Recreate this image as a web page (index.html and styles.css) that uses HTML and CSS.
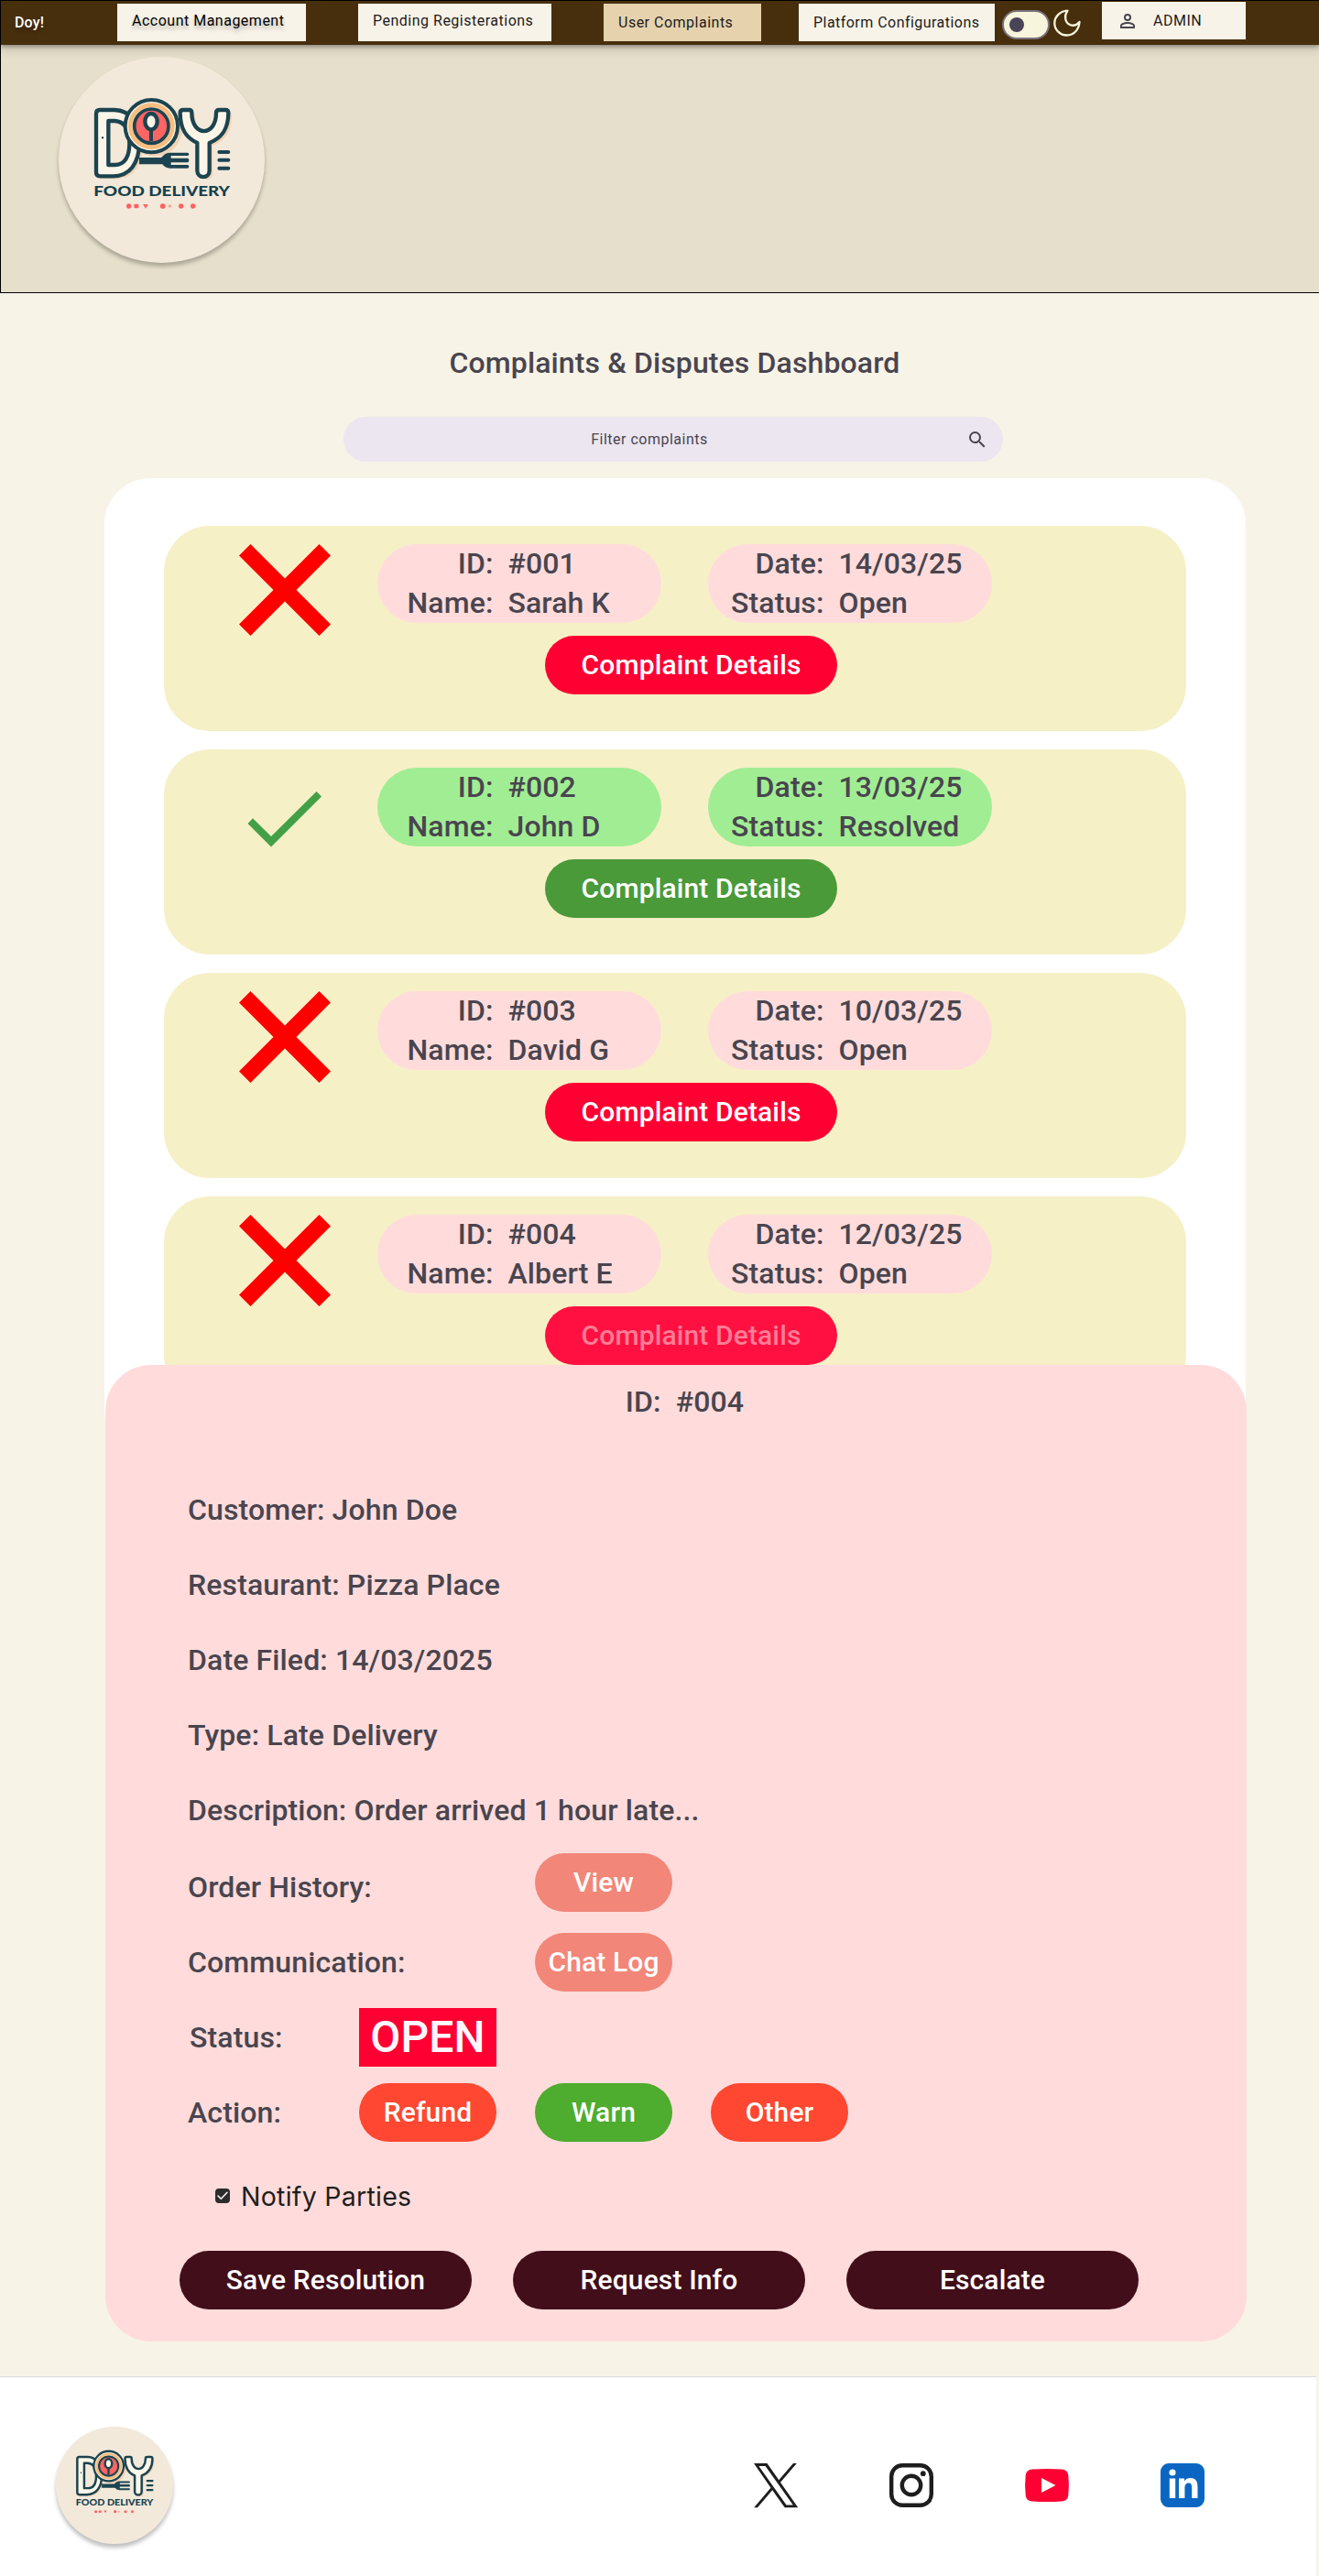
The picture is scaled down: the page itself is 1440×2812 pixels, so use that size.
FILE: index.html
```html
<!DOCTYPE html>
<html lang="en">
<head>
<meta charset="utf-8">
<title>Complaints &amp; Disputes Dashboard</title>
<link rel="stylesheet" href="styles.css">
</head>
<body>
<svg class="defs" width="0" height="0" aria-hidden="true">
  <symbol id="cross" viewBox="0 0 100 100"><path d="M12.5 0L50 37.5L87.5 0L100 12.5L62.5 50L100 87.5L87.5 100L50 62.5L12.5 100L0 87.5L37.5 50L0 12.5Z" fill="#f00"/></symbol>
  <symbol id="check" viewBox="0 0 100 100"><path d="M9.5 36L15 30.200L35 50L84.500 1L90 6.500L35 61.500Z" fill="#43a047"/></symbol>
</svg>

<header class="header">
  <nav class="bar">
    <span class="brand">Doy!</span>
    <a class="tab tab-account">Account Management</a>
    <a class="tab tab-pending">Pending Registerations</a>
    <a class="tab tab-complaints">User Complaints</a>
    <a class="tab tab-platform">Platform Configurations</a>
    <span class="switch"><span class="knob"></span></span>
    <svg class="moon" viewBox="0 0 30 30"><path d="M15.500 1.600C7.500 2 1.300 8 1.300 15.200C1.300 22.600 7.300 28.500 14.700 28.500C22 28.500 28 22.700 28.500 14C25.500 17.500 21.500 18.500 18 17C12.500 14.500 11.500 7 15.500 1.600Z" fill="none" stroke="#f7f5dc" stroke-width="2.300" stroke-linejoin="round"/></svg>
    <a class="tab tab-admin">
      <svg class="person" viewBox="4 4 16 16"><path fill="#49454f" d="M12 5.900a2.100 2.100 0 1 1 0 4.200 2.100 2.100 0 0 1 0-4.200m0 9c2.970 0 6.100 1.460 6.100 2.100v1.100H5.900V17c0-.64 3.130-2.100 6.100-2.100M12 4a4 4 0 1 0 0 8 4 4 0 0 0 0-8m0 9c-2.670 0-8 1.340-8 4v3h16v-3c0-2.660-5.330-4-8-4"/></svg>
      ADMIN
    </a>
  </nav>
  <svg class="logo logo-large" viewBox="0 0 225 225">
    <g id="logo" transform="translate(26 36) scale(.33333)" stroke-linejoin="round" stroke-linecap="round">
      <g fill="#f0d3b5" transform="translate(11 9)">
        <path d="M44 78Q44 66 56 66H105C160 66 186 120 186 175C186 240 155 283 100 283H56Q44 283 44 271Z"/>
        <circle cx="226" cy="119" r="90"/>
        <path d="M320 76Q320 66 330 66H350Q358 66 358 76C358 155 438 155 438 76Q438 66 448 66H468Q478 66 478 76C478 130 456 158 416 174V265C416 292 376 292 376 265V174C340 158 320 130 320 76Z"/>
      </g>
      <g fill="#fcf6e9" stroke="#1c4450" stroke-width="13">
        <path d="M45 78Q45 66 57 66H105C160 66 186 120 186 175C186 240 155 283 100 283H57Q45 283 45 271Z"/>
        <path fill="#f4e8d8" d="M85 102H106C138 104 154 130 154 175C154 220 138 246 106 246H85Z"/>
        <path d="M320 76Q320 66 330 66H350Q358 66 358 76C358 155 438 155 438 76Q438 66 448 66H468Q478 66 478 76C478 130 456 158 416 174V265C416 292 376 292 376 265V174C340 158 320 130 320 76Z"/>
      </g>
      <path d="M186 222H258Q272 206 286 206H344Q349 206 349 211Q349 216 344 216H290V224H344Q349 224 349 231Q349 238 344 238H290V246H344Q349 246 349 251Q349 257 344 257H286Q272 257 262 244H186Z" fill="#1c4450"/>
      <circle cx="226" cy="119" r="86" fill="#fcf6e9" stroke="#1c4450" stroke-width="12"/>
      <circle cx="226" cy="119" r="69" fill="none" stroke="#f9bd7f" stroke-width="14"/>
      <circle cx="226" cy="119" r="56" fill="#fd6464" stroke="#1c4450" stroke-width="11"/>
      <path d="M225 128V168" stroke="#1c4450" stroke-width="12" stroke-linecap="butt"/>
      <ellipse cx="225" cy="104" rx="20" ry="26" fill="#fcf6e9" stroke="#1c4450" stroke-width="13"/>
      <path d="M448 204H478M448 230H478M448 257H478" stroke="#1c4450" stroke-width="12"/>
      <circle cx="66" cy="157" r="3.5" fill="#1c2a30"/>
      <text x="37" y="348" textLength="446" lengthAdjust="spacingAndGlyphs" class="logo-text">FOOD DELIVERY</text>
      <g fill="#fd6060">
        <circle cx="152" cy="381" r="8"/><rect x="169" y="374" width="15" height="14" rx="4"/>
        <path d="M198 375H215L207 389Z"/><circle cx="263" cy="381" r="8.5"/>
        <circle cx="286" cy="381" r="5" fill="#fba184"/><circle cx="323" cy="381" r="8"/><circle cx="362" cy="381" r="8"/>
      </g>
    </g>
  </svg>
</header>

<main class="main">
  <h1 class="title">Complaints &amp; Disputes Dashboard</h1>
  <div class="search">
    <span class="search-text">Filter complaints</span>
    <svg class="search-icon" viewBox="0 0 24 24"><path fill="#49454f" d="M15.500 14h-.79l-.28-.27A6.470 6.470 0 0 0 16 9.500 6.500 6.500 0 1 0 9.500 16c1.610 0 3.090-.59 4.230-1.570l.27.28v.79l5 4.990L20.490 19zm-6 0C7.010 14 5 11.990 5 9.500S7.010 5 9.500 5 14 7.010 14 9.500 11.990 14 9.500 14"/></svg>
  </div>

  <section class="list">
    <article class="card">
      <svg class="mark"><use href="#cross"/></svg>
      <dl class="chip"><dt>ID:</dt><dd>#001</dd><dt>Name:</dt><dd>Sarah K</dd></dl>
      <dl class="chip"><dt>Date:</dt><dd>14/03/25</dd><dt>Status:</dt><dd>Open</dd></dl>
      <button class="btn details">Complaint Details</button>
    </article>
    <article class="card resolved">
      <svg class="mark mark-check"><use href="#check"/></svg>
      <dl class="chip"><dt>ID:</dt><dd>#002</dd><dt>Name:</dt><dd>John D</dd></dl>
      <dl class="chip"><dt>Date:</dt><dd>13/03/25</dd><dt>Status:</dt><dd>Resolved</dd></dl>
      <button class="btn details">Complaint Details</button>
    </article>
    <article class="card">
      <svg class="mark"><use href="#cross"/></svg>
      <dl class="chip"><dt>ID:</dt><dd>#003</dd><dt>Name:</dt><dd>David G</dd></dl>
      <dl class="chip"><dt>Date:</dt><dd>10/03/25</dd><dt>Status:</dt><dd>Open</dd></dl>
      <button class="btn details">Complaint Details</button>
    </article>
    <article class="card">
      <svg class="mark"><use href="#cross"/></svg>
      <dl class="chip"><dt>ID:</dt><dd>#004</dd><dt>Name:</dt><dd>Albert E</dd></dl>
      <dl class="chip"><dt>Date:</dt><dd>12/03/25</dd><dt>Status:</dt><dd>Open</dd></dl>
      <button class="btn details pressed">Complaint Details</button>
    </article>
  </section>

  <section class="panel">
    <h2 class="panel-title">ID:&nbsp; #004</h2>
    <p class="row">Customer: John Doe</p>
    <p class="row">Restaurant: Pizza Place</p>
    <p class="row">Date Filed: 14/03/2025</p>
    <p class="row">Type: Late Delivery</p>
    <p class="row">Description: Order arrived 1 hour late...</p>
    <div class="row row-history"><span class="label label-wide">Order History:</span><button class="btn small soft view">View</button></div>
    <div class="row"><span class="label label-wide">Communication:</span><button class="btn small soft">Chat Log</button></div>
    <div class="row"><span class="label label-status">Status:</span><span class="state">OPEN</span></div>
    <div class="row"><span class="label">Action:</span><span class="actions"><button class="btn small orange">Refund</button><button class="btn small warn">Warn</button><button class="btn small orange">Other</button></span></div>
    <label class="notify">
      <svg class="box" viewBox="0 0 16 16"><rect width="16" height="16" rx="4" fill="#2c2c2c"/><path d="M3 8L6.300 11.300L13 4.300" fill="none" stroke="#f5f5f5" stroke-width="1.600" stroke-linecap="round" stroke-linejoin="round"/></svg>
      Notify Parties
    </label>
    <div class="final">
      <button class="btn dark">Save Resolution</button>
      <button class="btn dark">Request Info</button>
      <button class="btn dark">Escalate</button>
    </div>
  </section>
</main>

<footer class="footer">
  <svg class="logo logo-small" viewBox="0 0 225 225"><use href="#logo"/></svg>
  <div class="social">
    <svg viewBox="0 0 48 48"><path fill="#1e1e1e" fill-rule="evenodd" d="M0 0H14.500L27.300 18.300L43 0H46.800L29 20.800L48.200 48.200H33.700L20.200 29.200L4 48.200H.2L18.500 26.700ZM5.400 3L35.500 45.500H42.800L12.600 3Z"/></svg>
    <svg viewBox="0 0 48 48"><rect x="2.200" y="2.200" width="43.600" height="43.600" rx="12" fill="none" stroke="#1e1e1e" stroke-width="4.400"/><circle cx="24" cy="24" r="10.200" fill="none" stroke="#1e1e1e" stroke-width="4.400"/><circle cx="36.800" cy="11.200" r="2.900" fill="#1e1e1e"/></svg>
    <svg viewBox="0 0 48 48"><path fill="#f03" d="M8 6.500Q24 5.500 40 6.500Q46.500 7 47.300 13Q48.500 24 47.300 35Q46.500 41 40 41.500Q24 42.500 8 41.500Q1.500 41 .7 35Q-.5 24 .7 13Q1.500 7 8 6.500Z"/><path fill="#fff" d="M18 16V32L33.500 24Z"/></svg>
    <svg viewBox="0 0 48 48"><rect width="48" height="48" rx="9" fill="#0a66c2"/><g fill="#fff"><circle cx="13" cy="10" r="3.600"/><path d="M9.800 16.500H16.200V38H9.800ZM20 16.500H26V19.500C27.500 17 30 16 32.800 16C38.500 16 40.500 19.800 40.500 26V38H34.200V27C34.200 23.500 33.500 21.500 30.700 21.500C27.500 21.500 26.400 24 26.400 27V38H20Z"/></g></svg>
  </div>
</footer>
</body>
</html>
```
FILE: styles.css
```css
* { box-sizing: border-box; margin: 0; padding: 0; }
body { width: 1440px; height: 2812px; background: #f7f3e7; color: #49454f; font-family: Roboto, sans-serif; overflow-x: hidden; }
.defs { display: block; }
.logo-text { font: 900 46px Lato, sans-serif; fill: #16404c; }

/* Header */
.header { height: 320px; background: #e6dfcb; border: 1px solid #000; border-right: 0; }
.bar { display: flex; align-items: flex-start; height: 48px; background: #472f0d; box-shadow: 0 2px 4px rgba(0,0,0,.3), 0 4px 10px 2px rgba(0,0,0,.12); color: #1d1b20; font-size: 16px; letter-spacing: .5px; line-height: 24px; }
.brand { width: 112px; margin: 12px 0 0 15px; color: #fff; font-weight: 500; letter-spacing: .15px; text-shadow: 0 4px 4px rgba(0,0,0,.25); }
.tab { height: 41px; margin-top: 3px; padding: 7px 0 0 16px; background: #f8f3e8; white-space: nowrap; }
.tab-account { width: 206px; color: #000; text-shadow: 0 4px 4px rgba(0,0,0,.25); }
.tab-pending { width: 211px; margin-left: 57px; }
.tab-complaints { width: 172px; margin-left: 57px; padding-top: 9px; background: #e6d3ae; }
.tab-platform { width: 214px; margin-left: 41px; padding-top: 9px; letter-spacing: .46px; }
.switch { width: 52px; height: 32px; margin: 10px 0 0 8px; padding: 6px; border: 2px solid #79747e; border-radius: 16px; background: #f7f5dc; }
.knob { display: block; width: 16px; height: 16px; border-radius: 50%; background: #4a4459; }
.moon { width: 30px; height: 30px; margin: 9px 0 0 4px; }
.tab-admin { display: flex; width: 157px; margin: 1px 0 0 23px; padding: 9px 0 0 20px; }
.person { width: 16px; height: 16px; margin: 4px 20px 0 0; }
.logo { display: block; overflow: visible; border-radius: 50%; background: #f3e9da; box-shadow: 0 4px 4px rgba(0,0,0,.25); }
.logo-large { width: 225px; height: 225px; margin: 13px 0 0 63px; }

/* Complaint list */
.main { padding: 0 80px 0 114px; }
.title { margin-top: 56px; padding-right: 1px; font-size: 32px; font-weight: 500; line-height: 40px; letter-spacing: .12px; text-align: center; }
.search { display: flex; align-items: center; width: 720px; height: 49px; margin: 39px 0 0 260.500px; padding-right: 16px; border-radius: 25px; background: #ece6f0; }
.search-text { flex: 1; padding-right: 11px; font-size: 16px; letter-spacing: .5px; text-align: center; }
.search-icon { width: 24px; height: 24px; }
.list { display: flex; flex-direction: column; gap: 20px; width: 1246px; height: 1068px; margin-top: 18px; padding: 52px 65px 0; border-radius: 50px; background: #fff; }
.card { display: grid; grid-template-columns: 182px 310px 310px; column-gap: 51px; grid-template-rows: 86px 64px; row-gap: 14px; flex: 0 0 224px; padding-top: 20px; border-radius: 50px; background: #f6f0c7; }
.mark { width: 100px; height: 100px; margin-left: 82px; overflow: visible; }
.mark-check { margin-top: 25px; }
.chip { display: grid; grid-template-columns: 126.500px 1fr; column-gap: 16px; grid-auto-rows: 43px; border-radius: 43px; background: #ffdcdb; font-size: 32px; font-weight: 500; line-height: 43px; letter-spacing: .12px; white-space: nowrap; }
.chip dt { text-align: right; }
.resolved .chip { background: #a1ed93; }
.btn { border: 0; border-radius: 32px; height: 64px; color: #fff; font: 500 30px/64px Roboto, sans-serif; letter-spacing: .13px; text-align: center; white-space: nowrap; }
.details { grid-column: 1 / -1; width: 319px; margin-left: 416px; background: #f03; }
.resolved .details { background: #4a9a3a; }
.pressed { background: #ff1040; color: #ff7d96; }

/* Complaint detail */
.panel { position: relative; width: 1246px; height: 1066px; margin: -100px 0 0 1px; padding-top: 20px; border-radius: 50px; background: #ffdcdb; font-size: 32px; font-weight: 500; letter-spacing: .13px; }
.panel-title { height: 97px; padding-left: 19px; font-size: 32px; font-weight: 500; line-height: 40px; text-align: center; }
.row { display: flex; align-items: center; height: 82px; padding-left: 90px; white-space: nowrap; }
.row-history { margin-top: 2px; }
.label { width: 187px; }
.label-wide { width: 379px; }
.label-status { padding-left: 2px; }
.view { margin-bottom: 10px; }
.small { width: 150px; }
.soft { background: #f28679; }
.orange { background: #ff4731; }
.warn { background: #4eac2f; }
.state { width: 150px; height: 64px; background: #f03; color: #fef7ff; font-size: 48px; line-height: 64px; text-align: center; }
.actions { display: flex; gap: 42px; }
.notify { display: flex; align-items: center; gap: 12px; height: 40px; margin: 30px 0 0 120px; color: #1e1e1e; font: 400 28.500px Inter, sans-serif; letter-spacing: .27px; }
.box { width: 16px; height: 16px; }
.final { display: flex; gap: 45px; margin: 40px 0 0 81px; }
.dark { width: 319px; background: #410e1a; }

/* Footer */
.footer { display: flex; align-items: center; justify-content: space-between; width: 1437px; height: 218px; margin-top: 38px; padding: 19px 122px 0 61px; border-top: 1px solid #d9d9d9; background: #fff; }
.logo-small { width: 128px; height: 128px; }
.social { display: flex; gap: 100px; }
.social svg { width: 48px; height: 48px; overflow: visible; }
```
